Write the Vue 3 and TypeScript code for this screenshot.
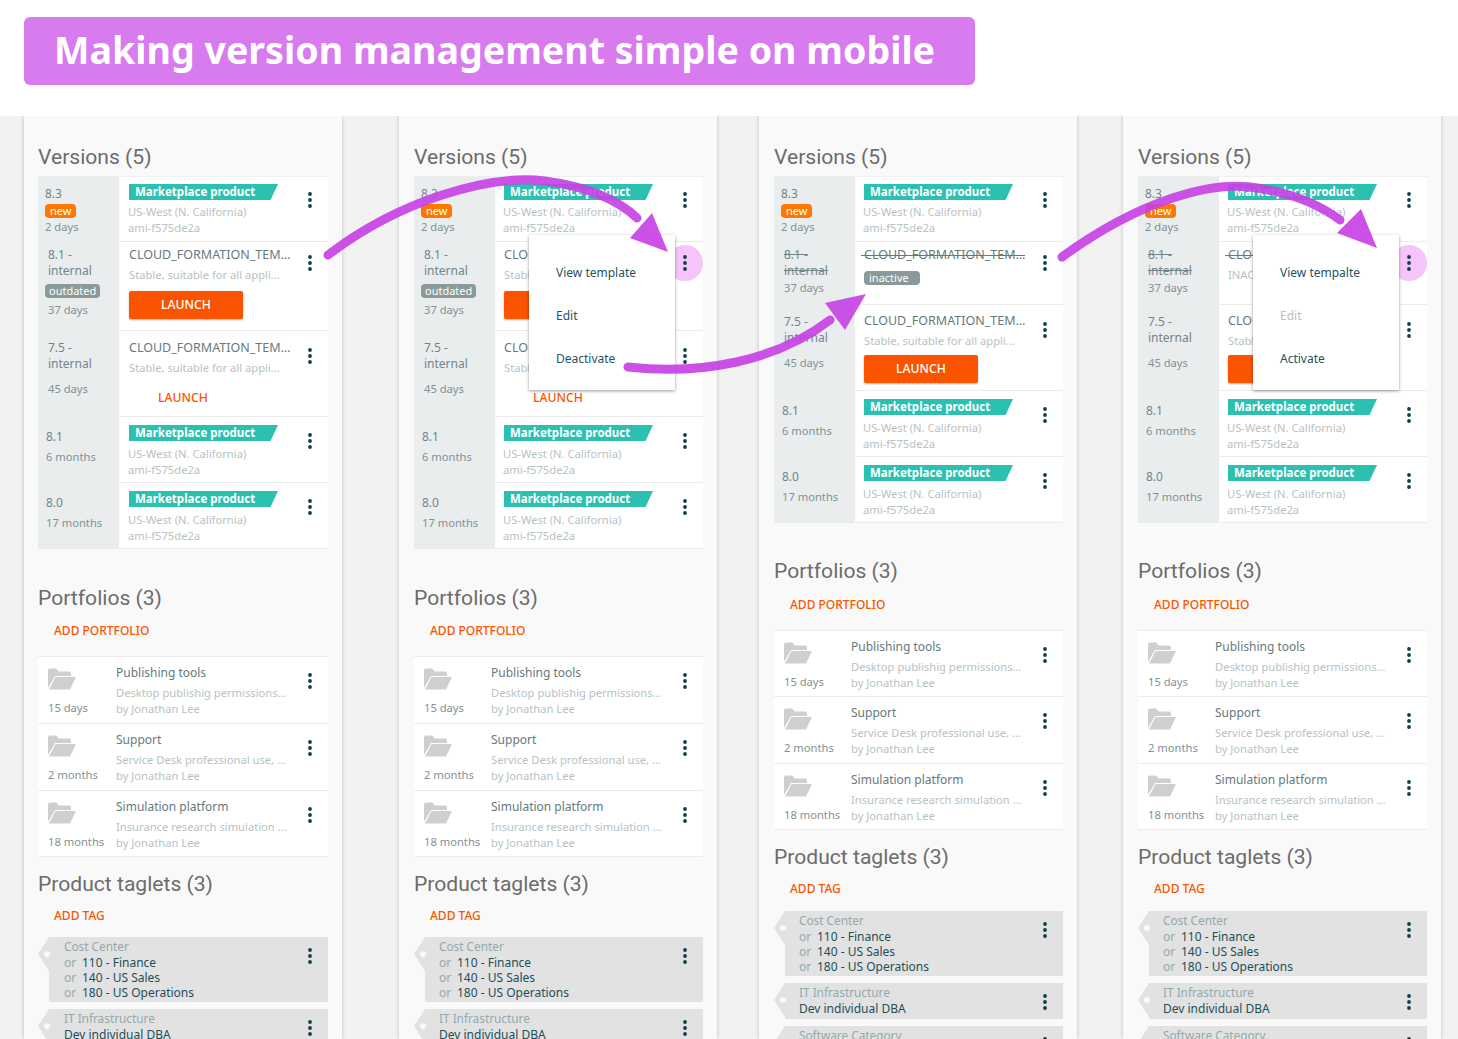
<script setup lang="ts">
type Row = {
  kind: 'product' | 'cloud' | 'struck'
  left: string[]
  badge?: string
  age: string
  launch?: 'solid' | 'flat'
  state?: 'badge' | 'caps'
  cls: string
}
type Panel = { cls: string; menu?: string[]; disabled?: string; rows: Row[] }

const p83: Row = { kind: 'product', left: ['8.3'], badge: 'new', age: '2 days', cls: 'r-new' }
const p81: Row = { kind: 'product', left: ['8.1'], age: '6 months', cls: 'r-old' }
const p80: Row = { kind: 'product', left: ['8.0'], age: '17 months', cls: 'r-old' }
const internal81: Row = { kind: 'cloud', left: ['8.1 -', 'internal'], badge: 'outdated', age: '37 days', launch: 'solid', cls: 'r-81' }
const internal75: Row = { kind: 'cloud', left: ['7.5 -', 'internal'], age: '45 days', launch: 'flat', cls: 'r-75' }
const solid75: Row = { kind: 'cloud', left: ['7.5 -', 'internal'], age: '45 days', launch: 'solid', cls: 'r-75s' }
const inactive: Row = { kind: 'struck', left: ['8.1 -', 'internal'], age: '37 days', state: 'badge', cls: 'r-off' }
const caps: Row = { ...inactive, state: 'caps' }

const panels: Panel[] = [
  { cls: 'p1', rows: [p83, internal81, internal75, p81, p80] },
  { cls: 'p2', menu: ['View template', 'Edit', 'Deactivate'], rows: [p83, internal81, internal75, p81, p80] },
  { cls: 'p3', rows: [p83, inactive, solid75, p81, p80] },
  { cls: 'p4', menu: ['View tempalte', 'Edit', 'Activate'], disabled: 'Edit', rows: [p83, caps, solid75, p81, p80] },
]

const portfolios = [
  { age: '15 days', title: 'Publishing tools', desc: 'Desktop publishig permissions…' },
  { age: '2 months', title: 'Support', desc: 'Service Desk professional use, …' },
  { age: '18 months', title: 'Simulation platform', desc: 'Insurance research simulation …' },
]
const tagValues = ['110 - Finance', '140 - US Sales', '180 - US Operations']
</script>

<template>
  <div class="page">
    <header class="top">
      <h1 class="banner">Making version management simple on mobile</h1>
    </header>

    <main class="board">
      <section v-for="panel in panels" :key="panel.cls" class="panel" :class="panel.cls">
        <h2 class="heading">Versions (5)</h2>
        <div class="list">
          <div v-for="(row, i) in panel.rows" :key="i" class="row" :class="row.cls">
            <div class="side">
              <div
                v-for="line in row.left"
                :key="line"
                class="ver"
                :class="{ indented: row.left.length > 1, off: row.kind === 'struck' }"
              >{{ line }}</div>
              <span v-if="row.badge" class="pill" :class="row.badge">{{ row.badge }}</span>
              <div class="age" :class="{ indented: row.left.length > 1 }">{{ row.age }}</div>
            </div>
            <div class="body">
              <template v-if="row.kind === 'product'">
                <div class="flag">Marketplace product</div>
                <div class="muted">US-West (N. California)</div>
                <div class="muted">ami-f575de2a</div>
              </template>
              <template v-else>
                <div class="name" :class="{ struck: row.kind === 'struck' }">CLOUD_FORMATION_TEM…</div>
                <span v-if="row.state === 'badge'" class="pill inactive">inactive</span>
                <div v-else-if="row.state === 'caps'" class="muted desc">INACTIVE</div>
                <div v-else class="muted desc">Stable, suitable for all appli…</div>
                <button v-if="row.launch === 'solid'" class="launch">LAUNCH</button>
                <button v-if="row.launch === 'flat'" class="launch flat">LAUNCH</button>
              </template>
            </div>
            <svg class="kebab" width="6" height="16" viewBox="0 0 6 16"><circle cx="3" cy="2" r="1.900"/><circle cx="3" cy="8" r="1.900"/><circle cx="3" cy="14" r="1.900"/></svg>
          </div>
        </div>

        <h2 class="heading second">Portfolios (3)</h2>
        <div class="add">ADD PORTFOLIO</div>
        <div class="folders">
          <div v-for="f in portfolios" :key="f.title" class="row folder-row">
            <div class="side plain">
              <svg class="folder" width="28" height="22" viewBox="0 0 28 22">
                <path d="M0 20V2.500Q0 .5 2 .5h6l3 3h10q2 0 2 2V8H7z" />
                <path d="M7.500 9H28l-6 12.500H1z" />
              </svg>
              <div class="age">{{ f.age }}</div>
            </div>
            <div class="body">
              <div class="name">{{ f.title }}</div>
              <div class="muted desc">{{ f.desc }}</div>
              <div class="muted">by Jonathan Lee</div>
            </div>
            <svg class="kebab" width="6" height="16" viewBox="0 0 6 16"><circle cx="3" cy="2" r="1.900"/><circle cx="3" cy="8" r="1.900"/><circle cx="3" cy="14" r="1.900"/></svg>
          </div>
        </div>

        <h2 class="heading third">Product taglets (3)</h2>
        <div class="add">ADD TAG</div>
        <div class="tags">
          <div class="tag">
            <div class="tag-text">
              <div class="tag-label">Cost Center</div>
              <div v-for="v in tagValues" :key="v" class="tag-value"><span class="or">or</span>{{ v }}</div>
            </div>
            <svg class="kebab" width="6" height="16" viewBox="0 0 6 16"><circle cx="3" cy="2" r="1.900"/><circle cx="3" cy="8" r="1.900"/><circle cx="3" cy="14" r="1.900"/></svg>
          </div>
          <div class="tag short">
            <div class="tag-text">
              <div class="tag-label">IT Infrastructure</div>
              <div class="tag-value">Dev individual DBA</div>
            </div>
            <svg class="kebab" width="6" height="16" viewBox="0 0 6 16"><circle cx="3" cy="2" r="1.900"/><circle cx="3" cy="8" r="1.900"/><circle cx="3" cy="14" r="1.900"/></svg>
          </div>
          <div class="tag short">
            <div class="tag-text">
              <div class="tag-label">Software Category</div>
            </div>
            <svg class="kebab" width="6" height="16" viewBox="0 0 6 16"><circle cx="3" cy="2" r="1.900"/><circle cx="3" cy="8" r="1.900"/><circle cx="3" cy="14" r="1.900"/></svg>
          </div>
        </div>

        <template v-if="panel.menu">
          <div class="halo"></div>
          <div class="menu">
            <div v-for="item in panel.menu" :key="item" class="menu-item" :class="{ dis: item === panel.disabled }">{{ item }}</div>
          </div>
        </template>
      </section>
    </main>

    <svg class="arrows" width="1458" height="1039" viewBox="0 0 1458 1039">
      <g fill="none" stroke="#c63fe4" stroke-width="9" stroke-linecap="round" opacity=".9">
        <path d="M328 255C400 200 490 174 545 181C590 187 618 200 637 218" />
        <path d="M628 367C700 375 775 362 830 320" />
        <path d="M1062 257C1140 200 1210 182 1250 187C1290 192 1320 205 1340 220" />
      </g>
      <g fill="#c63fe4" opacity=".9">
        <path d="M630 238L652 213L668 252z" />
        <path d="M866 294L825 303L845 330z" />
        <path d="M1337 233L1361 209L1377 248z" />
      </g>
    </svg>
  </div>
</template>

<style>
html, body { margin: 0; background: #fff; }
</style>

<style scoped>
.page {
  position: relative;
  width: 1458px;
  height: 1039px;
  overflow: hidden;
  background: #f2f2f2;
  font-family: "Noto Sans", "Open Sans", sans-serif;
  font-size: 12px;
  line-height: 16px;
  color: #66797d;
}
.top {
  position: relative;
  z-index: 1;
  height: 116px;
  box-sizing: border-box;
  padding: 17px 24px 0;
  background: #fff;
}
.banner {
  width: 951px;
  height: 68px;
  margin: 0;
  border-radius: 6px;
  background: #d77bef;
  color: #fff;
  font-size: 37.600px;
  line-height: 66px;
  font-weight: 700;
  padding-left: 30px;
  box-sizing: border-box;
  white-space: nowrap;
}
.board {
  display: flex;
  padding-left: 24px;
}
.panel {
  position: relative;
  flex: none;
  width: 318px;
  height: 923px;
  box-sizing: border-box;
  padding: 24px 0 0 14px;
  background: #f9f9f9;
  box-shadow: 0 0 4px rgba(0, 0, 0, .22);
}
.p2 { margin-left: 57px; padding-left: 15px; }
.p3 { margin-left: 42px; padding-left: 15px; }
.p4 { margin-left: 46px; padding-left: 15px; }
.heading {
  margin: 0 0 3px;
  height: 34px;
  font: 400 21.100px/34px Roboto, sans-serif;
  color: #6c6c6c;
}
.second { margin-top: 32px; margin-bottom: 8px; }
.p3 .second, .p4 .second { margin-top: 31px; margin-bottom: 9px; }
.third { margin-top: 10px; margin-bottom: 7px; }
.list, .folders { width: 290px; }
.p2 .list, .p3 .list, .p4 .list, .p2 .folders, .p3 .folders, .p4 .folders { width: 289px; }
.list { border-top: 1px solid #efefef; margin-top: -1px; }
.folders { margin-top: 17px; border-top: 1px solid #ececec; }
.row {
  display: flex;
  box-sizing: border-box;
  background: #fff;
  border-bottom: 1px solid #ececec;
}
.side {
  flex: none;
  width: 81px;
  box-sizing: border-box;
  background: #e9edee;
  padding-left: 7px;
  color: #839195;
}
.ver { color: #72858a; }
.age { font-size: 11.200px; }
.indented { margin-left: 3px; }
.off { text-decoration: line-through; }
.pill {
  display: block;
  width: max-content;
  height: 14px;
  border-radius: 4px;
  font-size: 11px;
  line-height: 13px;
  color: #fff;
  padding: 0 5px;
}
.new { background: #ff7700; margin: 2px 0 1px; }
.outdated { background: #8a9a9a; padding: 0 4px; margin: 5px 0 4px; }
.inactive { background: #8a9a9a; width: 46px; margin-top: 8px; }
.body {
  flex: 1;
  min-width: 0;
  padding-left: 10px;
  white-space: nowrap;
}
.p2 .body, .p3 .body, .p4 .body { padding-left: 9px; }
.flag {
  width: 149px;
  height: 16px;
  box-sizing: border-box;
  padding-left: 6px;
  margin-bottom: 4px;
  background: #2cc0b0;
  color: #fff;
  font-weight: 700;
  font-size: 11.500px;
  line-height: 16px;
  clip-path: polygon(0 0, 100% 0, 95% 100%, 0 100%);
}
.muted { color: #b7c2c4; margin-left: -1px; font-size: 11.200px; }
.desc { margin-top: 4px; margin-left: 0; }
.name { color: #66797d; font-size: 12.500px; }
.struck { position: relative; }
.struck::after {
  content: "";
  position: absolute;
  left: -3px;
  width: 164px;
  top: 8px;
  height: 1px;
  background: #66797d;
}
.launch {
  display: block;
  width: 114px;
  height: 28px;
  margin-top: 8px;
  padding: 0;
  border: 0;
  border-radius: 2px;
  background: #fa5400;
  color: #fff;
  font: 500 12.200px/28px "Noto Sans", sans-serif;
  box-shadow: 0 1px 2px rgba(0, 0, 0, .3);
}
.flat {
  background: none;
  box-shadow: none;
  color: #fa5400;
  width: 108px;
}
.kebab {
  flex: none;
  fill: #0f3f4a;
  margin: 15px 15px 0 21px;
  position: relative;
  z-index: 2;
}

/* row variants */
.r-new { height: 65px; }
.r-new .side { padding-top: 9px; }
.r-new .body { padding-top: 7px; }
.r-old { height: 66px; }
.r-old .side { padding-top: 12px; padding-left: 8px; }
.r-old .age { margin-top: 4px; }
.r-old .body { padding-top: 8px; }
.r-old .flag { margin-bottom: 5px; }
.r-old .kebab { margin-top: 16px; }
.r-81 { height: 89px; }
.r-81 .side, .r-81 .body, .r-off .side, .r-off .body { padding-top: 5px; }
.r-81 .kebab, .r-off .kebab { margin-top: 13px; }
.r-75, .r-75s { height: 86px; }
.r-75 .side, .r-75 .body, .r-75s .side { padding-top: 9px; }
.r-75s .body { padding-top: 8px; }
.r-75 .age, .r-75s .age { margin-top: 9px; }
.r-75 .kebab, .r-75s .kebab { margin-top: 17px; }
.r-75s .launch { margin-top: 6px; }
.r-off { height: 63px; }
.r-off .age { margin-top: 1px; }

.add {
  padding-left: 16px;
  color: #fa5400;
  font-size: 12px;
  font-weight: 500;
}
.folder-row { height: 67px; }
.folder-row:last-child { height: 66px; }
.p3 .folder-row:first-child, .p4 .folder-row:first-child { height: 66px; }
.side.plain { width: 78px; background: #fff; padding: 11px 0 0 10px; }
.p2 .side.plain, .p3 .side.plain, .p4 .side.plain { width: 77px; }
.folder { display: block; fill: #cfcfcf; margin-bottom: 10px; }
.folder-row .body { padding: 8px 0 0 0; }
.folder-row .name { font-size: 12px; }
.folder-row .muted { margin-left: 0; }
.folder-row .kebab { margin-top: 16px; }

.tags { margin-top: 13px; width: 290px; }
.p3 .tags, .p4 .tags { margin-top: 14px; }
.p2 .tags, .p3 .tags, .p4 .tags { width: 289px; }
.tag {
  position: relative;
  display: flex;
  height: 65px;
  margin: 0 0 7px 11px;
  background: #e2e2e2;
}
.short { height: 36px; }
.tag::before {
  content: "";
  position: absolute;
  left: -11px;
  top: 0;
  width: 11px;
  height: 34px;
  background: #e2e2e2;
  clip-path: polygon(100% 0, 0 50%, 100% 100%);
}
.tag::after {
  content: "";
  position: absolute;
  left: -5px;
  top: 14px;
  width: 6px;
  height: 6px;
  border-radius: 50%;
  background: #f9f9f9;
}
.tag-text {
  flex: 1;
  padding: 1px 0 0 15px;
  line-height: 15px;
}
.p2 .tag-text, .p3 .tag-text, .p4 .tag-text { padding-left: 14px; }
.tag-label { color: #93a9ac; height: 17px; line-height: 16px; font-size: 11.800px; }
.tag-value { color: #1d4f59; }
.or { color: #93a9ac; display: inline-block; width: 18px; }
.tag .kebab { margin-top: 11px; }

/* overlays */
.halo {
  position: absolute;
  left: 268px;
  top: 129px;
  width: 36px;
  height: 36px;
  border-radius: 50%;
  background: #f5c4fb;
  z-index: 1;
}
.menu {
  position: absolute;
  left: 130px;
  top: 119px;
  width: 146px;
  height: 155px;
  box-sizing: border-box;
  padding: 16px 0 0 27px;
  background: #fff;
  box-shadow: 0 1px 3px rgba(0, 0, 0, .4);
  z-index: 3;
}
.menu-item {
  height: 43px;
  line-height: 43px;
  color: #24555f;
}
.dis { color: #b7c2c4; }
.arrows {
  position: absolute;
  left: 0;
  top: 0;
  pointer-events: none;
  z-index: 5;
}
</style>
